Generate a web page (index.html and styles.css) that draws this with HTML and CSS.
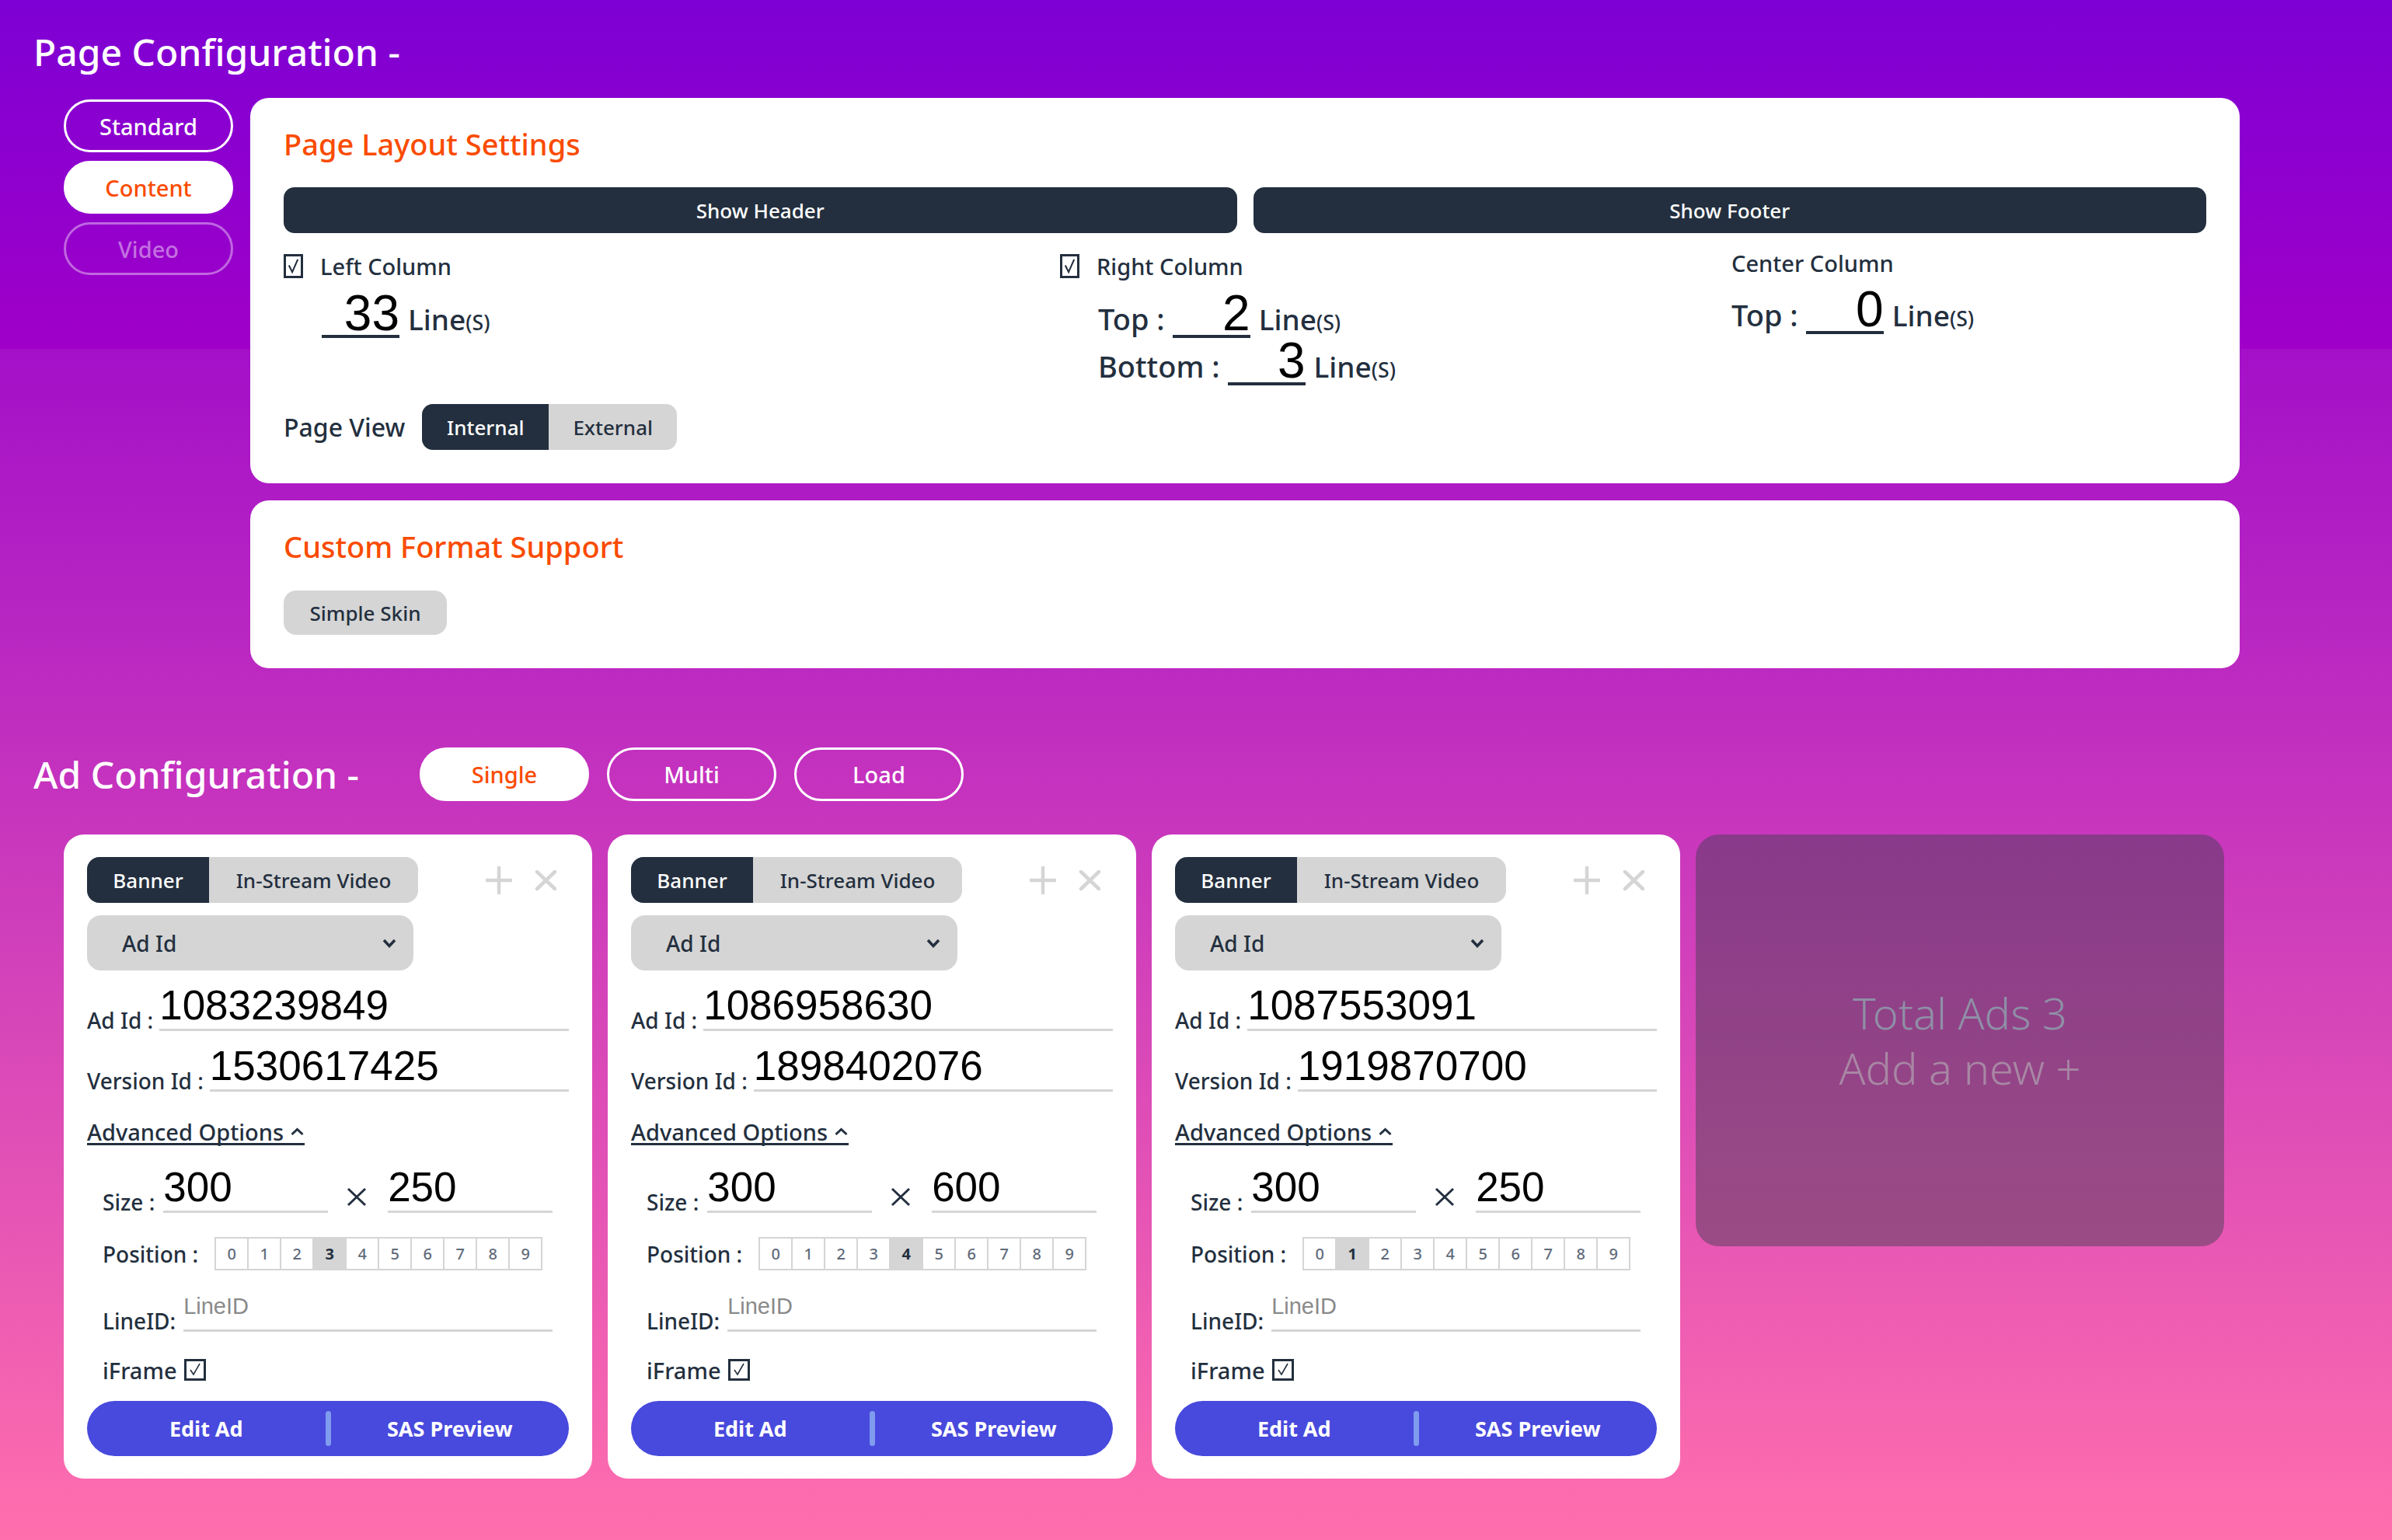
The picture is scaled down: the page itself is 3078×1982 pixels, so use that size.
FILE: index.html
```html
<!DOCTYPE html>
<html lang="en">
<head>
<meta charset="utf-8">
<title>Page Configuration</title>
<link rel="stylesheet" href="styles.css">
</head>
<body>
<div class="page">
  <section class="page-config">
    <h1 class="section-title">Page Configuration -</h1>
    <div class="config-row">
      <nav class="side-nav">
        <button class="nav-btn">Standard</button>
        <button class="nav-btn active">Content</button>
        <button class="nav-btn disabled">Video</button>
      </nav>
      <div class="cards">
        <div class="card layout-card">
          <h2 class="card-title">Page Layout Settings</h2>
          <div class="show-row">
            <button class="show-btn">Show Header</button>
            <button class="show-btn">Show Footer</button>
          </div>
          <div class="columns">
            <div class="col">
              <div class="col-label"><span class="chk chk-tall"><svg viewBox="0 0 20 26"><path d="M4 12 L8.5 21 L16 4" fill="none" stroke="#232f3e" stroke-width="2.2"/></svg></span>Left Column</div>
              <div class="line-row indent"><span class="num">33</span><span class="lines">Line<span class="sc">(s)</span></span></div>
            </div>
            <div class="col">
              <div class="col-label"><span class="chk chk-tall"><svg viewBox="0 0 20 26"><path d="M4 12 L8.5 21 L16 4" fill="none" stroke="#232f3e" stroke-width="2.2"/></svg></span>Right Column</div>
              <div class="line-row indent"><span class="row-lbl">Top :</span><span class="num">2</span><span class="lines">Line<span class="sc">(s)</span></span></div>
              <div class="line-row indent second"><span class="row-lbl">Bottom :</span><span class="num">3</span><span class="lines">Line<span class="sc">(s)</span></span></div>
            </div>
            <div class="col col-center">
              <div class="col-label plain">Center Column</div>
              <div class="line-row"><span class="row-lbl">Top :</span><span class="num">0</span><span class="lines">Line<span class="sc">(s)</span></span></div>
            </div>
          </div>
          <div class="view-row">
            <span class="view-lbl">Page View</span>
            <div class="seg seg-view"><span class="seg-item on">Internal</span><span class="seg-item">External</span></div>
          </div>
        </div>
        <div class="card format-card">
          <h2 class="card-title">Custom Format Support</h2>
          <button class="skin-btn">Simple Skin</button>
        </div>
      </div>
    </div>
  </section>

  <section class="ad-config">
    <div class="ad-header">
      <h1 class="section-title">Ad Configuration -</h1>
      <div class="pills">
        <button class="pill active">Single</button>
        <button class="pill">Multi</button>
        <button class="pill">Load</button>
      </div>
    </div>
    <div class="ad-cards">

      <div class="ad-card">
        <div class="ad-top">
          <div class="seg seg-ad"><span class="seg-item on">Banner</span><span class="seg-item">In-Stream Video</span></div>
          <div class="ad-icons">
            <svg class="ico-plus" viewBox="0 0 34 36"><path d="M17 1 V35 M0 18 H34" stroke="#d5d5d5" stroke-width="4.5" stroke-linecap="round" fill="none"/></svg>
            <svg class="ico-x" viewBox="0 0 29 26"><path d="M3 2 L26 24 M26 2 L3 24" stroke="#d5d5d5" stroke-width="4.5" stroke-linecap="round" fill="none"/></svg>
          </div>
        </div>
        <div class="select"><span>Ad Id</span><svg class="chev" viewBox="0 0 18 12"><path d="M2 2 L9 9.5 L16 2" fill="none" stroke="#232f3e" stroke-width="3.5"/></svg></div>
        <div class="field-row"><span class="field-lbl">Ad Id :</span><span class="field-val">1083239849</span></div>
        <div class="field-row"><span class="field-lbl">Version Id :</span><span class="field-val">1530617425</span></div>
        <div class="adv">Advanced Options <svg class="chev-up" viewBox="0 0 19 11"><path d="M2.5 9 L9.5 2.5 L16.5 9" fill="none" stroke="#232f3e" stroke-width="3"/></svg></div>
        <div class="adv-body">
          <div class="size-row"><span class="field-lbl">Size :</span><span class="size-val">300</span><svg class="times" viewBox="0 0 26 25"><path d="M2 2 L24 23 M24 2 L2 23" stroke="#232f3e" stroke-width="3" fill="none"/></svg><span class="size-val">250</span></div>
          <div class="pos-row"><span class="field-lbl">Position :</span><div class="pos"><span>0</span><span>1</span><span>2</span><span class="sel">3</span><span>4</span><span>5</span><span>6</span><span>7</span><span>8</span><span>9</span></div></div>
          <div class="lineid-row"><span class="field-lbl">LineID:</span><span class="lineid-val">LineID</span></div>
          <div class="iframe-row"><span>iFrame</span><span class="chk chk-sq"><svg viewBox="0 0 22 22"><path d="M5 11 L9 17 L17 3" fill="none" stroke="#232f3e" stroke-width="1.6"/></svg></span></div>
        </div>
        <div class="btn-bar"><span class="bar-btn">Edit Ad</span><i class="bar-div"></i><span class="bar-btn">SAS Preview</span></div>
      </div>

      <div class="ad-card">
        <div class="ad-top">
          <div class="seg seg-ad"><span class="seg-item on">Banner</span><span class="seg-item">In-Stream Video</span></div>
          <div class="ad-icons">
            <svg class="ico-plus" viewBox="0 0 34 36"><path d="M17 1 V35 M0 18 H34" stroke="#d5d5d5" stroke-width="4.5" stroke-linecap="round" fill="none"/></svg>
            <svg class="ico-x" viewBox="0 0 29 26"><path d="M3 2 L26 24 M26 2 L3 24" stroke="#d5d5d5" stroke-width="4.5" stroke-linecap="round" fill="none"/></svg>
          </div>
        </div>
        <div class="select"><span>Ad Id</span><svg class="chev" viewBox="0 0 18 12"><path d="M2 2 L9 9.5 L16 2" fill="none" stroke="#232f3e" stroke-width="3.5"/></svg></div>
        <div class="field-row"><span class="field-lbl">Ad Id :</span><span class="field-val">1086958630</span></div>
        <div class="field-row"><span class="field-lbl">Version Id :</span><span class="field-val">1898402076</span></div>
        <div class="adv">Advanced Options <svg class="chev-up" viewBox="0 0 19 11"><path d="M2.5 9 L9.5 2.5 L16.5 9" fill="none" stroke="#232f3e" stroke-width="3"/></svg></div>
        <div class="adv-body">
          <div class="size-row"><span class="field-lbl">Size :</span><span class="size-val">300</span><svg class="times" viewBox="0 0 26 25"><path d="M2 2 L24 23 M24 2 L2 23" stroke="#232f3e" stroke-width="3" fill="none"/></svg><span class="size-val">600</span></div>
          <div class="pos-row"><span class="field-lbl">Position :</span><div class="pos"><span>0</span><span>1</span><span>2</span><span>3</span><span class="sel">4</span><span>5</span><span>6</span><span>7</span><span>8</span><span>9</span></div></div>
          <div class="lineid-row"><span class="field-lbl">LineID:</span><span class="lineid-val">LineID</span></div>
          <div class="iframe-row"><span>iFrame</span><span class="chk chk-sq"><svg viewBox="0 0 22 22"><path d="M5 11 L9 17 L17 3" fill="none" stroke="#232f3e" stroke-width="1.6"/></svg></span></div>
        </div>
        <div class="btn-bar"><span class="bar-btn">Edit Ad</span><i class="bar-div"></i><span class="bar-btn">SAS Preview</span></div>
      </div>

      <div class="ad-card">
        <div class="ad-top">
          <div class="seg seg-ad"><span class="seg-item on">Banner</span><span class="seg-item">In-Stream Video</span></div>
          <div class="ad-icons">
            <svg class="ico-plus" viewBox="0 0 34 36"><path d="M17 1 V35 M0 18 H34" stroke="#d5d5d5" stroke-width="4.5" stroke-linecap="round" fill="none"/></svg>
            <svg class="ico-x" viewBox="0 0 29 26"><path d="M3 2 L26 24 M26 2 L3 24" stroke="#d5d5d5" stroke-width="4.5" stroke-linecap="round" fill="none"/></svg>
          </div>
        </div>
        <div class="select"><span>Ad Id</span><svg class="chev" viewBox="0 0 18 12"><path d="M2 2 L9 9.5 L16 2" fill="none" stroke="#232f3e" stroke-width="3.5"/></svg></div>
        <div class="field-row"><span class="field-lbl">Ad Id :</span><span class="field-val">1087553091</span></div>
        <div class="field-row"><span class="field-lbl">Version Id :</span><span class="field-val">1919870700</span></div>
        <div class="adv">Advanced Options <svg class="chev-up" viewBox="0 0 19 11"><path d="M2.5 9 L9.5 2.5 L16.5 9" fill="none" stroke="#232f3e" stroke-width="3"/></svg></div>
        <div class="adv-body">
          <div class="size-row"><span class="field-lbl">Size :</span><span class="size-val">300</span><svg class="times" viewBox="0 0 26 25"><path d="M2 2 L24 23 M24 2 L2 23" stroke="#232f3e" stroke-width="3" fill="none"/></svg><span class="size-val">250</span></div>
          <div class="pos-row"><span class="field-lbl">Position :</span><div class="pos"><span>0</span><span class="sel">1</span><span>2</span><span>3</span><span>4</span><span>5</span><span>6</span><span>7</span><span>8</span><span>9</span></div></div>
          <div class="lineid-row"><span class="field-lbl">LineID:</span><span class="lineid-val">LineID</span></div>
          <div class="iframe-row"><span>iFrame</span><span class="chk chk-sq"><svg viewBox="0 0 22 22"><path d="M5 11 L9 17 L17 3" fill="none" stroke="#232f3e" stroke-width="1.6"/></svg></span></div>
        </div>
        <div class="btn-bar"><span class="bar-btn">Edit Ad</span><i class="bar-div"></i><span class="bar-btn">SAS Preview</span></div>
      </div>

      <div class="add-card">
        <div class="add-line1">Total Ads 3</div>
        <div class="add-line2">Add a new +</div>
      </div>

    </div>
  </section>
</div>
</body>
</html>
```

FILE: styles.css
```css
* { box-sizing: border-box; }

html, body {
  margin: 0;
  padding: 0;
}

body {
  width: 3078px;
  height: 1982px;
  overflow: hidden;
  font-family: "Noto Sans", "Open Sans", sans-serif;
  font-weight: 500;
  color: #232f3e;
  background: linear-gradient(180deg, #7e00d4 0px, #a000c8 449px, #a310c8 449px, #ff6fad 1982px);
}

button {
  font-family: inherit;
  font-weight: inherit;
  cursor: pointer;
}

.page {
  padding-left: 43px;
}

.section-title {
  margin: 0;
  font-size: 48px;
  line-height: 58px;
  font-weight: 500;
  color: #ffffff;
  white-space: nowrap;
}

.page-config > .section-title {
  padding-top: 38px;
}

.config-row {
  display: flex;
  gap: 22px;
  margin-top: 30px;
  padding-left: 39px;
}

.side-nav {
  display: flex;
  flex-direction: column;
  gap: 11px;
  width: 218px;
  margin-top: 2px;
}

.nav-btn {
  height: 68px;
  border-radius: 34px;
  border: 3px solid #ffffff;
  background: transparent;
  color: #ffffff;
  font-size: 29px;
  padding: 0;
}

.nav-btn.active {
  background: #ffffff;
  color: #fa4b00;
}

.nav-btn.disabled {
  border-color: rgba(255, 255, 255, 0.4);
  color: rgba(255, 255, 255, 0.45);
}

.cards {
  width: 2560px;
  display: flex;
  flex-direction: column;
  gap: 22px;
}

.card {
  background: #ffffff;
  border-radius: 24px;
  padding: 35px 43px 43px;
}

.card-title {
  margin: 0;
  font-size: 38px;
  line-height: 48px;
  font-weight: 500;
  color: #fa4b00;
}

.show-row {
  display: flex;
  gap: 21px;
  margin-top: 32px;
}

.show-btn {
  flex: 1;
  height: 59px;
  border: none;
  border-radius: 14px;
  background: #232f3e;
  color: #ffffff;
  font-size: 26px;
}

.columns {
  display: grid;
  grid-template-columns: 999px 864px 1fr;
  margin-top: 22px;
}

.col-label {
  display: flex;
  align-items: center;
  gap: 22px;
  height: 40px;
  font-size: 29px;
}

.col-label.plain {
  height: 32px;
}

.col-center .line-row {
  margin-top: 16px;
}

.chk {
  display: inline-flex;
  align-items: center;
  justify-content: center;
  border: 3px solid #232f3e;
  background: #ffffff;
}

.chk svg {
  width: 100%;
  height: 100%;
  display: block;
}

.chk-tall {
  width: 25px;
  height: 31px;
}

.chk-sq {
  width: 28px;
  height: 28px;
}

.line-row {
  display: flex;
  align-items: baseline;
  margin-top: 13px;
}

.line-row.second {
  margin-top: 0;
}

.line-row.indent {
  padding-left: 49px;
}

.row-lbl {
  font-size: 38px;
  margin-right: 10px;
  white-space: nowrap;
}

.num {
  display: inline-block;
  width: 100px;
  text-align: right;
  font-family: "Liberation Sans", Arial, sans-serif;
  font-weight: 400;
  font-size: 64px;
  line-height: 56px;
  color: #000000;
  border-bottom: 4px solid #232f3e;
}

.lines {
  font-size: 37px;
  margin-left: 11px;
}

.sc {
  font-size: 0.72em;
  text-transform: uppercase;
}

.view-row {
  display: flex;
  align-items: center;
  gap: 22px;
  margin-top: 23px;
}

.view-lbl {
  font-size: 32px;
}

.seg {
  display: inline-flex;
  background: #d5d5d5;
  overflow: hidden;
}

.seg-item {
  display: flex;
  align-items: center;
  justify-content: center;
  color: #232f3e;
}

.seg-item.on {
  background: #232f3e;
  color: #ffffff;
}

.seg-view {
  height: 59px;
  border-radius: 14px;
  font-size: 26px;
}

.seg-view .seg-item:first-child {
  width: 163px;
}

.seg-view .seg-item:last-child {
  width: 165px;
}

.skin-btn {
  display: block;
  margin-top: 33px;
  width: 210px;
  height: 57px;
  border: none;
  border-radius: 16px;
  background: #d5d5d5;
  color: #232f3e;
  font-size: 26px;
}

/* Ad configuration */

.ad-header {
  display: flex;
  align-items: center;
  margin-top: 102px;
  height: 69px;
}

.ad-header .section-title {
  width: 497px;
}

.pills {
  display: flex;
  gap: 23px;
}

.pill {
  width: 218px;
  height: 69px;
  border-radius: 35px;
  border: 3px solid #ffffff;
  background: transparent;
  color: #ffffff;
  font-size: 29px;
  padding: 0;
}

.pill.active {
  background: #ffffff;
  color: #fa4b00;
}

.ad-cards {
  display: flex;
  align-items: flex-start;
  gap: 20px;
  margin-top: 43px;
  padding-left: 39px;
}

.ad-card {
  width: 680px;
  background: #ffffff;
  border-radius: 26px;
  padding: 29px 30px 29px;
}

.ad-top {
  display: flex;
  align-items: center;
  height: 59px;
}

.seg-ad {
  width: 426px;
  height: 59px;
  border-radius: 16px;
  font-size: 26px;
}

.seg-ad .seg-item:first-child {
  width: 157px;
}

.seg-ad .seg-item:last-child {
  flex: 1;
}

.ad-icons {
  display: flex;
  align-items: center;
  gap: 29px;
  margin-left: 87px;
}

.ico-plus {
  width: 34px;
  height: 36px;
  display: block;
}

.ico-x {
  width: 29px;
  height: 26px;
  display: block;
}

.select {
  display: flex;
  align-items: center;
  justify-content: space-between;
  width: 420px;
  height: 71px;
  margin-top: 16px;
  padding: 0 22px 0 45px;
  border-radius: 18px;
  background: #d5d5d5;
  font-size: 28px;
}

.chev {
  width: 18px;
  height: 12px;
  display: block;
}

.field-row {
  display: flex;
  align-items: flex-end;
  gap: 8px;
  margin-top: 19px;
}

.field-lbl {
  font-size: 28px;
  line-height: 1;
  white-space: nowrap;
}

.field-val {
  flex: 1;
  font-family: "Liberation Sans", Arial, sans-serif;
  font-weight: 400;
  font-size: 53px;
  line-height: 52px;
  color: #000000;
  padding-bottom: 4px;
  border-bottom: 3px solid #d5d5d5;
}

.adv {
  display: inline-flex;
  align-items: center;
  gap: 8px;
  margin-top: 37px;
  font-size: 29px;
  line-height: 29px;
  border-bottom: 3px solid #232f3e;
}

.chev-up {
  width: 19px;
  height: 11px;
  display: block;
}

.adv-body {
  padding: 0 21px 0 20px;
}

.size-row {
  display: flex;
  align-items: flex-end;
  margin-top: 28px;
}

.size-row .field-lbl {
  margin-right: 11px;
}

.size-val {
  width: 212px;
  font-family: "Liberation Sans", Arial, sans-serif;
  font-weight: 400;
  font-size: 53px;
  line-height: 52px;
  color: #000000;
  padding-bottom: 4px;
  border-bottom: 3px solid #d5d5d5;
}

.times {
  width: 26px;
  height: 25px;
  margin: 0 27px 8px 24px;
  flex: none;
}

.pos-row {
  display: flex;
  align-items: center;
  gap: 21px;
  margin-top: 31px;
}

.pos {
  display: flex;
  border: 2px solid #d5d5d5;
}

.pos span {
  width: 42px;
  height: 39px;
  display: flex;
  align-items: center;
  justify-content: center;
  font-size: 20px;
  color: #5f6b7a;
  border-left: 2px solid #d5d5d5;
}

.pos span:first-child {
  border-left: none;
  width: 40px;
}

.pos span.sel {
  background: #d5d5d5;
  color: #232f3e;
  font-weight: 700;
}

.lineid-row {
  display: flex;
  align-items: flex-end;
  gap: 10px;
  margin-top: 32px;
}

.lineid-val {
  flex: 1;
  font-family: "Liberation Sans", Arial, sans-serif;
  font-weight: 400;
  font-size: 29px;
  line-height: 29px;
  color: #8a8a8a;
  padding-bottom: 15px;
  border-bottom: 3px solid #d5d5d5;
}

.iframe-row {
  display: flex;
  align-items: center;
  gap: 9px;
  margin-top: 35px;
  font-size: 29px;
  height: 28px;
}

.btn-bar {
  display: flex;
  align-items: center;
  height: 71px;
  margin-top: 26px;
  border-radius: 36px;
  background: #4849dd;
}

.bar-btn {
  flex: 1;
  text-align: center;
  color: #ffffff;
  font-weight: 700;
  font-size: 27px;
}

.bar-div {
  width: 7px;
  height: 45px;
  border-radius: 4px;
  background: #7f9cef;
}

.add-card {
  width: 680px;
  height: 530px;
  border-radius: 30px;
  background: rgba(60, 62, 76, 0.45);
  display: flex;
  flex-direction: column;
  align-items: center;
  justify-content: center;
  font-size: 56px;
  font-weight: 300;
  line-height: 71px;
}

.add-line1 {
  color: #8f8fa6;
}

.add-line2 {
  color: #a887a4;
}
```
